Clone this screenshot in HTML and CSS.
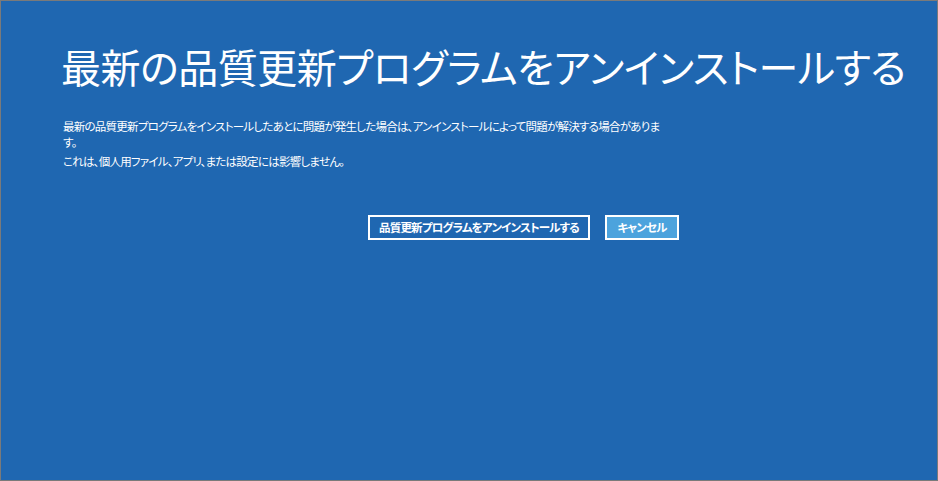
FILE: index.html
```html
<!DOCTYPE html>
<html lang="ja">
<head>
<meta charset="utf-8">
<link rel="stylesheet" href="styles.css">
</head>
<body>
<div class="screen">
  <h1 class="title">最新の品質更新プログラムをアンインストールする</h1>
  <div class="desc">
    <p class="para">最新の品質更新プログラムをインストールしたあとに問題が発生した場合は、アンインストールによって問題が解決する場合があります。</p>
    <p class="para">これは、個人用ファイル、アプリ、または設定には影響しません。</p>
  </div>
  <div class="actions">
    <button class="btn btn-outline">品質更新プログラムをアンインストールする</button>
    <button class="btn btn-fill">キャンセル</button>
  </div>
</div>
</body>
</html>
```
FILE: styles.css
```css
html, body {
  margin: 0;
  padding: 0;
  background: #1f67b1;
}
.screen {
  box-sizing: border-box;
  width: 938px;
  height: 481px;
  border: 1px solid #7a7a7a;
  background: #1f67b1;
  color: #ffffff;
  font-family: "Noto Sans CJK JP", "Noto Sans", sans-serif;
  font-feature-settings: "palt";
  padding: 0 0 0 62px;
}
.title {
  margin: 0 0 0 -2px;
  padding-top: 37px;
  font-size: 40px;
  font-weight: 400;
  letter-spacing: -0.45px;
  line-height: 56px;
  white-space: nowrap;
}
.desc {
  margin-top: 24px;
  width: 601px;
}
.para {
  margin: 0 0 3px 0;
  font-size: 11.5px;
  letter-spacing: -0.75px;
  line-height: 16px;
}
.actions {
  display: flex;
  gap: 15px;
  margin-top: 46px;
  padding-left: 305px;
}
.btn {
  box-sizing: border-box;
  height: 25px;
  border: 2px solid #ffffff;
  color: #ffffff;
  font-family: "Noto Sans CJK JP", sans-serif;
  font-feature-settings: "palt";
  font-weight: 700;
  font-size: 11.5px;
  letter-spacing: -0.8px;
  line-height: 19px;
  padding: 0;
  margin: 0;
  white-space: nowrap;
}
.btn-outline {
  width: 222px;
  background: transparent;
}
.btn-fill {
  width: 74px;
  background: #4ca3dd;
}
```
